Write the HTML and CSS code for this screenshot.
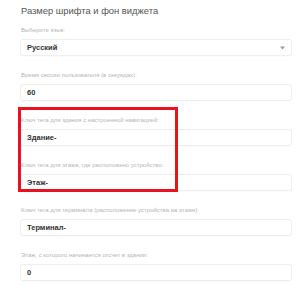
FILE: index.html
```html
<!DOCTYPE html>
<html lang="ru">
<head>
<meta charset="UTF-8">
<meta name="viewport" content="width=device-width, initial-scale=1.0">
<title>Настройки виджета</title>
<link rel="stylesheet" href="styles.css">
</head>
<body>
<div class="container">
    <h2>Размер шрифта и фон виджета</h2>
    <div class="form-group">
        <label>Выберите язык:</label>
        <div class="field select">
            <span>Русский</span>
            <svg class="caret" width="5" height="4" viewBox="0 0 5 4"><path d="M0 0.5h5L2.5 3.5z" fill="#9a9a9a"/></svg>
        </div>
    </div>
    <div class="form-group">
        <label>Время сессии пользователя (в секундах):</label>
        <div class="field">60</div>
    </div>
    <div class="highlight">
        <div class="form-group">
            <label>Ключ тега для здания с настроенной навигацией:</label>
            <div class="field">Здание-</div>
        </div>
        <div class="form-group">
            <label>Ключ тега для этажа, где расположено устройство:</label>
            <div class="field">Этаж-</div>
        </div>
    </div>
    <div class="form-group">
        <label>Ключ тега для терминала (расположение устройства на этаже):</label>
        <div class="field">Терминал-</div>
    </div>
    <div class="form-group">
        <label>Этаж, с которого начинается отсчет в здании:</label>
        <div class="field">0</div>
    </div>
</div>
</body>
</html>
```

FILE: styles.css
```css
body {
    font-family: "Liberation Sans", Arial, sans-serif;
    margin: 0;
    padding: 0;
    background-color: #fff;
}
.container {
    padding: 4px 8px 0 20px;
}
h2 {
    font-size: 9.4px;
    font-weight: normal;
    color: #555;
    margin: 0 0 0 1px;
    line-height: 13px;
    margin-bottom: 9px;
}
.form-group {
    margin-bottom: 15px;
}
.form-group label {
    display: block;
    font-size: 6px;
    line-height: 9px;
    color: #b5b5b5;
    margin: 0 0 4px 1px;
}
.field {
    display: flex;
    align-items: center;
    height: 17px;
    box-sizing: border-box;
    padding: 0 6px;
    border: 1px solid #eeeeee;
    border-radius: 3px;
    box-shadow: 0 1px 1px rgba(0, 0, 0, 0.02);
    font-size: 7.5px;
    font-weight: bold;
    color: #333;
}
.select {
    justify-content: space-between;
}
.highlight {
    position: relative;
}
.highlight::after {
    content: "";
    position: absolute;
    top: -9px;
    left: -2px;
    width: 154px;
    bottom: -1px;
    border: 3px solid #e8131f;
    pointer-events: none;
}
```
